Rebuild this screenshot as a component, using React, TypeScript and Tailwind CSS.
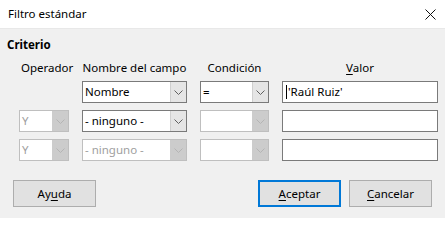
import { ReactNode } from 'react'

function Arrow({ disabled }: { disabled?: boolean }) {
  return (
    <svg width="9" height="5" viewBox="0 0 9 5" fill="none">
      <path d="M0.5 0.5 L4.5 4.5 L8.5 0.5" stroke={disabled ? '#b4b4b4' : '#606060'} strokeWidth="1" />
    </svg>
  )
}

function Combo({ text, disabled, width }: { text?: string; disabled?: boolean; width: string }) {
  return (
    <div className={`${width} h-[22px] flex border ${disabled ? 'border-[#bfbfbf]' : 'border-[#7a7a7a]'} bg-white`}>
      <div className={`flex-1 pl-[2px] leading-[20px] whitespace-nowrap ${disabled ? 'text-[#a0a0a0]' : 'text-black'}`}>{text}</div>
      <div className={`w-[16px] flex items-center justify-center border-l ${disabled ? 'bg-[#cccccc] border-[#cccccc]' : 'bg-[#e5e5e5] border-[#cfcfcf]'}`}>
        <Arrow disabled={disabled} />
      </div>
    </div>
  )
}

function Field({ children }: { children?: ReactNode }) {
  return <div className="w-[156px] h-[22px] border border-[#7a7a7a] bg-white pl-[3px] leading-[20px] flex items-center">{children}</div>
}

function Btn({ children, focused }: { children: ReactNode; focused?: boolean }) {
  return (
    <div className={`w-[83px] h-[27px] flex items-center justify-center bg-[#e1e1e1] ${focused ? 'border-2 border-[#0078d7]' : 'border border-[#adadad]'}`}>
      {children}
    </div>
  )
}

export default function App() {
  return (
    <div className="w-[445px] h-[218px] bg-[#f0f0f0] text-[11.5px] text-black overflow-hidden" style={{ fontFamily: '"Noto Sans", "Open Sans", sans-serif' }}>
      {/* title bar */}
      <div className="h-[29px] bg-white flex items-center justify-between pl-[8px] pr-[9px] border-b border-[#e8e8e8]">
        <span>Filtro estándar</span>
        <svg width="11" height="11" viewBox="0 0 11 11">
          <path d="M0.5 0.5 L10.5 10.5 M10.5 0.5 L0.5 10.5" stroke="#111" strokeWidth="1" />
        </svg>
      </div>

      <div className="pl-[7px] pt-[8px] font-bold leading-[16px]">Criterio</div>

      <div className="pl-[19px] pt-[8px]">
        <div className="grid grid-cols-[50px_105px_69px_156px] gap-x-[13px] gap-y-[7px] whitespace-nowrap">
          <div className="text-center leading-[13px] pl-[2px]">Operador</div>
          <div className="text-center leading-[13px]">Nombre del campo</div>
          <div className="text-center leading-[13px]">Condición</div>
          <div className="text-center leading-[13px]">
            <span className="underline underline-offset-2">V</span>alor
          </div>

          <div />
          <Combo width="w-[105px]" text="Nombre" />
          <Combo width="w-[69px]" text="=" />
          <Field>
            <span className="w-px h-[14px] bg-black mr-[1px]" />
            'Raúl Ruiz'
          </Field>

          <Combo width="w-[50px]" text="Y" disabled />
          <Combo width="w-[105px]" text="- ninguno -" />
          <Combo width="w-[69px]" disabled />
          <Field />

          <Combo width="w-[50px]" text="Y" disabled />
          <Combo width="w-[105px]" text="- ninguno -" disabled />
          <Combo width="w-[69px]" disabled />
          <Field />
        </div>
      </div>

      <div className="flex pl-[13px] pr-[13px] pt-[19px]">
        <Btn>
          Ay<span className="underline underline-offset-2">u</span>da
        </Btn>
        <div className="flex-1" />
        <div className="flex gap-[8px]">
          <Btn focused>
            <span className="underline underline-offset-2">A</span>ceptar
          </Btn>
          <Btn>
            <span className="underline underline-offset-2">C</span>ancelar
          </Btn>
        </div>
      </div>
    </div>
  )
}
